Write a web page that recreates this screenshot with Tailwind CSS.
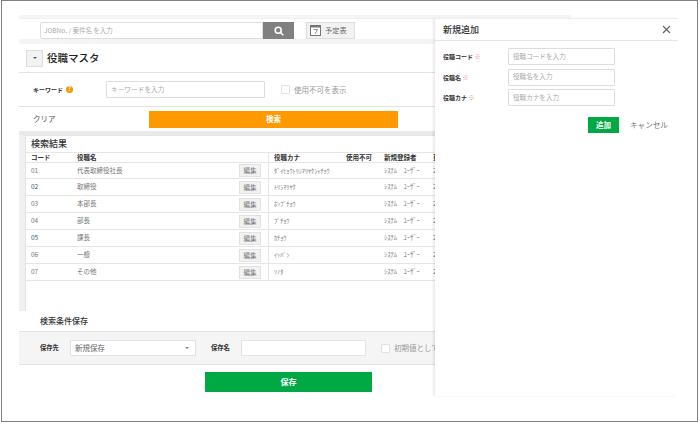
<!DOCTYPE html>
<html lang="ja">
<head>
<meta charset="UTF-8">
<title>役職マスタ</title>
<script src="https://cdn.jsdelivr.net/npm/@tailwindcss/browser@4"></script>
</head>
<body class="bg-white overflow-hidden font-['Noto_Sans_CJK_JP','Liberation_Sans',sans-serif] text-[8px] text-[#555]">
<div class="ml-px w-[697px] h-[422px] border border-[#808080] overflow-hidden pl-[17px] pt-[14px]">
  <div class="w-[552px] h-[3px] bg-[#f6f6f6]"></div>
  <div class="flex h-[378px]">
    <!-- main -->
    <div class="w-[416px] h-full overflow-hidden flex flex-col border-t border-[#f0f0f0]">
      <div class="h-[20px] shrink-0 flex items-start pt-[3px] pl-[21px]">
        <div class="w-[223px] h-[17px] bg-white border border-[#ddd] rounded-l-[2px] px-[3px] flex items-center text-[6.5px] text-[#aaa]">JOBNo. / 案件名 を入力</div>
        <div class="w-[31px] h-[17px] bg-[#808080] flex items-center justify-center">
          <svg width="10" height="10" viewBox="0 0 10 10" fill="none" stroke="#fff" stroke-width="1.6"><circle cx="4.2" cy="4.2" r="3"/><path d="M6.5 6.5 9.3 9.3"/></svg>
        </div>
        <div class="ml-3 w-[49px] h-[17px] bg-[#f2f2f2] border border-[#ddd] flex items-center pl-[3px] gap-[4px] text-[7.2px] text-[#666]">
          <svg width="11" height="11" viewBox="0 0 11 11"><rect x=".5" y=".5" width="10" height="10" fill="#fff" stroke="#777"/><rect x=".5" y=".5" width="10" height="2" fill="#777"/><path d="M3.5 4.5h4L5 9" fill="none" stroke="#777" stroke-width=".8"/></svg>
          <span>予定表</span>
        </div>
      </div>
      <div class="h-[5px] shrink-0 bg-[#f4f4f4]"></div>
      <div class="h-[29px] shrink-0 flex items-center pl-[7px] border-b border-[#e2e2e2]">
        <div class="w-[17px] h-[17px] bg-[#f2f2f2] border border-[#ddd] flex items-center justify-center">
          <span class="w-0 h-0 border-x-[2px] border-x-transparent border-t-[2px] border-t-[#555]"></span>
        </div>
        <h1 class="ml-1 text-[10.5px] font-medium text-[#222] leading-none">役職マスタ</h1>
      </div>
      <div class="h-[34px] shrink-0 flex items-center pl-[14px] border-b border-[#e2e2e2]">
        <span class="w-[33px] shrink-0 whitespace-nowrap font-bold text-[6px] text-[#333]">キーワード</span>
        <span class="w-[7px] h-[7px] rounded-full bg-[#f39800] text-white text-[5.5px] font-bold leading-[7px] text-center">?</span>
        <div class="ml-[33px] w-[159px] h-[17px] bg-white border border-[#ddd] rounded-[1px] px-1 flex items-center text-[6.7px] text-[#aaa]">キーワードを入力</div>
        <span class="ml-4 w-[9px] h-[9px] bg-white border border-[#e2e2e2] rounded-[1px]"></span>
        <span class="ml-1 text-[7.5px] text-[#999]">使用不可を表示</span>
      </div>
      <div class="h-[24px] shrink-0 flex items-center pl-[14px]">
        <span class="w-[116px] text-[7.5px] text-[#555]">クリア</span>
        <div class="w-[249px] h-[17px] bg-[#ff9900] text-white font-bold text-[7.5px] flex items-center justify-center">検索</div>
      </div>
      <div class="h-[4px] shrink-0 bg-[#e9e9e9]"></div>
      <!-- results -->
      <div class="flex-1 min-h-0 bg-[#f0f0f0] pl-[6px]">
        <div class="h-full bg-white border-l border-t border-[#e4e4e4] w-[600px]">
          <div class="h-[16px] pl-[5px] pt-[1px] text-[9px] leading-[14px] font-medium text-[#333]">検索結果</div>
          <div class="h-[11px] grid grid-cols-[46px_191px_78px_38px_49px_1fr] items-stretch pl-[5px] border-y border-[#e6e6e6] font-bold text-[6.5px] text-[#333] leading-[9px]">
            <span>コード</span><span>役職名</span><span class="border-l border-[#e6e6e6] pl-[5px]">役職カナ</span><span>使用不可</span><span>新規登録者</span><span>更新</span>
          </div>
          <div class="divide-y divide-[#e6e6e6] border-b border-[#e6e6e6] text-[6.5px] text-[#777]">
            <div class="h-[16px] grid grid-cols-[46px_162px_29px_78px_38px_49px_1fr] items-center pl-[5px]"><span>01</span><span>代表取締役社長</span><span class="w-[22px] h-[13px] bg-[#f2f2f2] border border-[#e2e2e2] text-center leading-[11px]">編集</span><span class="self-stretch flex items-center border-l border-[#e6e6e6] pl-[5px] text-[6.2px] whitespace-nowrap">ﾀﾞｲﾋｮｳﾄﾘｼﾏﾘﾔｸｼｬﾁｮｳ</span><span></span><span class="whitespace-nowrap">ｼｽﾃﾑ　ﾕｰｻﾞｰ</span><span>2</span></div>
            <div class="h-[17px] grid grid-cols-[46px_162px_29px_78px_38px_49px_1fr] items-center pl-[5px]"><span class="text-[#345c8c]">02</span><span>取締役</span><span class="w-[22px] h-[13px] bg-[#f2f2f2] border border-[#e2e2e2] text-center leading-[11px]">編集</span><span class="self-stretch flex items-center border-l border-[#e6e6e6] pl-[5px] text-[6.2px] whitespace-nowrap">ﾄﾘｼﾏﾘﾔｸ</span><span></span><span class="whitespace-nowrap">ｼｽﾃﾑ　ﾕｰｻﾞｰ</span><span>2</span></div>
            <div class="h-[17px] grid grid-cols-[46px_162px_29px_78px_38px_49px_1fr] items-center pl-[5px]"><span>03</span><span>本部長</span><span class="w-[22px] h-[13px] bg-[#f2f2f2] border border-[#e2e2e2] text-center leading-[11px]">編集</span><span class="self-stretch flex items-center border-l border-[#e6e6e6] pl-[5px] text-[6.2px] whitespace-nowrap">ﾎﾝﾌﾞﾁｮｳ</span><span></span><span class="whitespace-nowrap">ｼｽﾃﾑ　ﾕｰｻﾞｰ</span><span>2</span></div>
            <div class="h-[17px] grid grid-cols-[46px_162px_29px_78px_38px_49px_1fr] items-center pl-[5px]"><span>04</span><span>部長</span><span class="w-[22px] h-[13px] bg-[#f2f2f2] border border-[#e2e2e2] text-center leading-[11px]">編集</span><span class="self-stretch flex items-center border-l border-[#e6e6e6] pl-[5px] text-[6.2px] whitespace-nowrap">ﾌﾞﾁｮｳ</span><span></span><span class="whitespace-nowrap">ｼｽﾃﾑ　ﾕｰｻﾞｰ</span><span>2</span></div>
            <div class="h-[17px] grid grid-cols-[46px_162px_29px_78px_38px_49px_1fr] items-center pl-[5px]"><span class="text-[#345c8c]">05</span><span>課長</span><span class="w-[22px] h-[13px] bg-[#f2f2f2] border border-[#e2e2e2] text-center leading-[11px]">編集</span><span class="self-stretch flex items-center border-l border-[#e6e6e6] pl-[5px] text-[6.2px] whitespace-nowrap">ｶﾁｮｳ</span><span></span><span class="whitespace-nowrap">ｼｽﾃﾑ　ﾕｰｻﾞｰ</span><span>2</span></div>
            <div class="h-[17px] grid grid-cols-[46px_162px_29px_78px_38px_49px_1fr] items-center pl-[5px]"><span>06</span><span>一般</span><span class="w-[22px] h-[13px] bg-[#f2f2f2] border border-[#e2e2e2] text-center leading-[11px]">編集</span><span class="self-stretch flex items-center border-l border-[#e6e6e6] pl-[5px] text-[6.2px] whitespace-nowrap">ｲｯﾊﾟﾝ</span><span></span><span class="whitespace-nowrap">ｼｽﾃﾑ　ﾕｰｻﾞｰ</span><span>2</span></div>
            <div class="h-[16px] grid grid-cols-[46px_162px_29px_78px_38px_49px_1fr] items-center pl-[5px]"><span>07</span><span>その他</span><span class="w-[22px] h-[13px] bg-[#f2f2f2] border border-[#e2e2e2] text-center leading-[11px]">編集</span><span class="self-stretch flex items-center border-l border-[#e6e6e6] pl-[5px] text-[6.2px] whitespace-nowrap">ｿﾉﾀ</span><span></span><span class="whitespace-nowrap">ｼｽﾃﾑ　ﾕｰｻﾞｰ</span><span>2</span></div>
          </div>
        </div>
      </div>
      <!-- save conditions -->
      <div class="h-[85px] shrink-0 bg-white">
        <div class="h-[21px] pl-[21px] flex items-center border-b border-[#e2e2e2] font-medium text-[8px] text-[#333]">検索条件保存</div>
        <div class="h-[33px] pl-[21px] flex items-center bg-[#f5f5f5] border-b border-[#e2e2e2] whitespace-nowrap">
          <span class="w-[30px] shrink-0 font-bold text-[6.3px] text-[#333]">保存先</span>
          <div class="w-[126px] h-[16px] shrink-0 bg-white border border-[#e2e2e2] rounded-[1px] pl-1 pr-[6px] flex items-center justify-between text-[7.5px] text-[#666]">
            <span>新規保存</span>
            <span class="w-0 h-0 border-x-[2px] border-x-transparent border-t-[2px] border-t-[#888]"></span>
          </div>
          <span class="ml-[15px] w-[30px] shrink-0 font-bold text-[6.3px] text-[#333]">保存名</span>
          <div class="w-[125px] h-[16px] shrink-0 bg-white border border-[#e2e2e2] rounded-[1px]"></div>
          <span class="ml-[15px] w-[9px] h-[9px] shrink-0 bg-white border border-[#e2e2e2] rounded-[1px]"></span>
          <span class="ml-1 shrink-0 text-[7.5px] text-[#999]">初期値として保存</span>
        </div>
        <div class="pt-[7px] pl-[186px]">
          <div class="w-[167px] h-[20px] bg-[#00a944] text-white font-bold text-[8px] flex items-center justify-center">保存</div>
        </div>
      </div>
    </div>
    <!-- side panel -->
    <div class="relative w-[243px] h-full bg-white border-t border-[#eee] shadow-[-2px_0_2px_rgba(0,0,0,0.08)]">
      <div class="h-[22px] pl-[8px] pr-[7px] flex items-center justify-between border-b border-[#e6e6e6]">
        <h2 class="text-[9px] font-medium text-[#333]">新規追加</h2>
        <svg width="9" height="9" viewBox="0 0 9 9" fill="none" stroke="#666" stroke-width="1.2"><path d="M1 1 8 8M8 1 1 8"/></svg>
      </div>
      <div class="pt-[7px] pl-[8px] flex flex-col gap-[3.5px]">
        <div class="flex items-center h-[17px]">
          <span class="w-[65px] font-bold text-[6px] text-[#333]">役職コード <span class="text-[#f08fa0] font-normal">※</span></span>
          <div class="w-[107px] h-[17px] border border-[#ddd] rounded-[1px] px-1 flex items-center text-[6.6px] text-[#aaa]">役職コードを入力</div>
        </div>
        <div class="flex items-center h-[17px]">
          <span class="w-[65px] font-bold text-[6px] text-[#333]">役職名 <span class="text-[#f08fa0] font-normal">※</span></span>
          <div class="w-[107px] h-[17px] border border-[#ddd] rounded-[1px] px-1 flex items-center text-[6.6px] text-[#aaa]">役職名を入力</div>
        </div>
        <div class="flex items-center h-[17px]">
          <span class="w-[65px] font-bold text-[6px] text-[#333]">役職カナ <span class="text-[#f08fa0] font-normal">※</span></span>
          <div class="w-[107px] h-[17px] border border-[#ddd] rounded-[1px] px-1 flex items-center text-[6.6px] text-[#aaa]">役職カナを入力</div>
        </div>
      </div>
      <div class="mt-[11px] pl-[153px] flex items-center">
        <div class="w-[31px] h-[16px] bg-[#00a944] text-white font-bold text-[7.5px] flex items-center justify-center">追加</div>
        <span class="ml-[11px] text-[7.6px] text-[#777]">キャンセル</span>
      </div>
    </div>
  </div>
</div>
</body>
</html>
